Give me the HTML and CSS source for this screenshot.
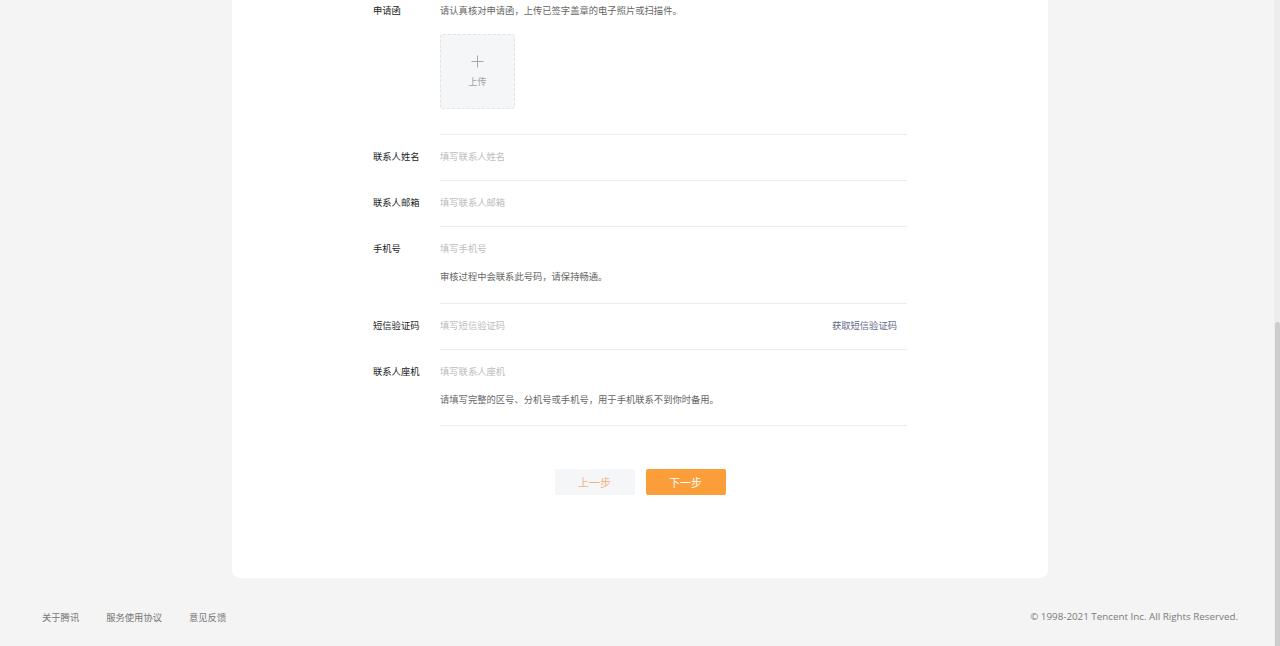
FILE: index.html
```html
<!DOCTYPE html>
<html lang="zh-CN">
<head>
    <meta charset="UTF-8">
    <title>申请资料</title>
    <link rel="stylesheet" href="styles.css">
</head>
<body>
    <div class="card">
        <form class="form" onsubmit="return false;">
            <div class="row row-first">
                <label class="label">申请函</label>
                <div class="field">
                    <p class="hint hint-top">请认真核对申请函，上传已签字盖章的电子照片或扫描件。</p>
                    <div class="upload">
                        <svg class="plus" width="13" height="13" viewBox="0 0 13 13">
                            <path d="M6.5 0.5v12M0.5 6.5h12" stroke="#a8a8a8" stroke-width="1" fill="none"/>
                        </svg>
                        <span class="upload-text">上传</span>
                    </div>
                </div>
            </div>

            <div class="row">
                <label class="label">联系人姓名</label>
                <div class="field">
                    <input class="input" type="text" placeholder="填写联系人姓名">
                </div>
            </div>

            <div class="row">
                <label class="label">联系人邮箱</label>
                <div class="field">
                    <input class="input" type="text" placeholder="填写联系人邮箱">
                </div>
            </div>

            <div class="row row-hint">
                <label class="label">手机号</label>
                <div class="field">
                    <input class="input" type="text" placeholder="填写手机号">
                    <p class="hint">审核过程中会联系此号码，请保持畅通。</p>
                </div>
            </div>

            <div class="row">
                <label class="label">短信验证码</label>
                <div class="field field-inline">
                    <input class="input" type="text" placeholder="填写短信验证码">
                    <a class="sms-link" href="#">获取短信验证码</a>
                </div>
            </div>

            <div class="row row-hint row-last">
                <label class="label">联系人座机</label>
                <div class="field">
                    <input class="input" type="text" placeholder="填写联系人座机">
                    <p class="hint">请填写完整的区号、分机号或手机号，用于手机联系不到你时备用。</p>
                </div>
            </div>

            <div class="actions">
                <button class="btn btn-prev" type="button">上一步</button>
                <button class="btn btn-next" type="submit">下一步</button>
            </div>
        </form>
    </div>

    <footer class="footer">
        <nav class="footer-links">
            <a href="#">关于腾讯</a>
            <a href="#">服务使用协议</a>
            <a href="#">意见反馈</a>
        </nav>
        <span class="copyright">© 1998-2021 Tencent Inc. All Rights Reserved.</span>
    </footer>

    <div class="scrollbar"><div class="scrollbar-thumb"></div></div>
</body>
</html>
```

FILE: styles.css
```css
body {
    margin: 0;
    background: #f4f4f4;
    font-family: "Noto Sans CJK SC", "Noto Sans", sans-serif;
    font-size: 9.3px;
    color: #1c1c1c;
}

.card {
    width: 816px;
    margin: 0 auto;
    background: #fff;
    border-radius: 0 0 8px 8px;
    padding: 3px 0 83px;
    box-sizing: border-box;
}

.form {
    width: 534px;
    margin-left: 141px;
}

.row {
    display: flex;
    line-height: 14px;
}

.label {
    width: 67px;
    flex-shrink: 0;
    padding-top: 14px;
    color: #1c1c1c;
}

.row-first .label {
    padding-top: 0;
}

.field {
    width: 467px;
    padding: 14px 0 17px;
    border-bottom: 1px solid #ebebeb;
}

.row-first .field {
    padding: 0 0 25px;
}

.row-hint .field {
    padding-bottom: 20px;
}

.row-last .field {
    padding-bottom: 19px;
}

.field-inline {
    display: flex;
    justify-content: space-between;
    align-items: center;
}

.input {
    display: block;
    width: 300px;
    height: 14px;
    padding: 0;
    border: none;
    outline: none;
    font-family: inherit;
    font-size: 9.3px;
    color: #333;
    background: transparent;
}

.input::placeholder {
    color: #bdbdbd;
}

.hint {
    margin: 14px 0 0;
    color: #666;
}

.hint-top {
    margin: 0;
}

.upload {
    width: 75px;
    height: 75px;
    margin-top: 17px;
    box-sizing: border-box;
    border: 1px dashed #e3e4e8;
    border-radius: 3px;
    background: #f5f6f8;
    display: flex;
    flex-direction: column;
    align-items: center;
    padding-top: 20px;
}

.upload-text {
    margin-top: 7px;
    font-size: 9px;
    color: #a0a0a0;
}

.sms-link {
    margin-right: 10px;
    color: #5f6a86;
    text-decoration: none;
}

.actions {
    display: flex;
    justify-content: center;
    gap: 11px;
    margin: 43px 0 0 -141px;
    width: 816px;
}

.btn {
    width: 80px;
    height: 26px;
    border: none;
    border-radius: 2px;
    font-family: inherit;
    font-size: 11px;
    cursor: pointer;
}

.btn-prev {
    background: #f5f6f8;
    color: #f9b27a;
}

.btn-next {
    background: #fb9d38;
    color: #fff;
}

.footer {
    display: flex;
    justify-content: space-between;
    align-items: center;
    padding: 32px 42px 0;
    line-height: 14px;
    color: #777;
}

.footer-links {
    display: flex;
    gap: 27px;
}

.footer-links a {
    color: #777;
    text-decoration: none;
}

.copyright {
    font-family: "Open Sans", "Noto Sans", sans-serif;
    font-size: 9.8px;
    color: #7a7a7a;
}

.scrollbar {
    position: fixed;
    top: 0;
    right: 0;
    width: 6px;
    height: 100%;
    background: #ededed;
}

.scrollbar-thumb {
    position: absolute;
    top: 322px;
    left: 1px;
    right: 0;
    bottom: 0;
    background: #cdcdcd;
    border-radius: 3px 3px 0 0;
}
```
